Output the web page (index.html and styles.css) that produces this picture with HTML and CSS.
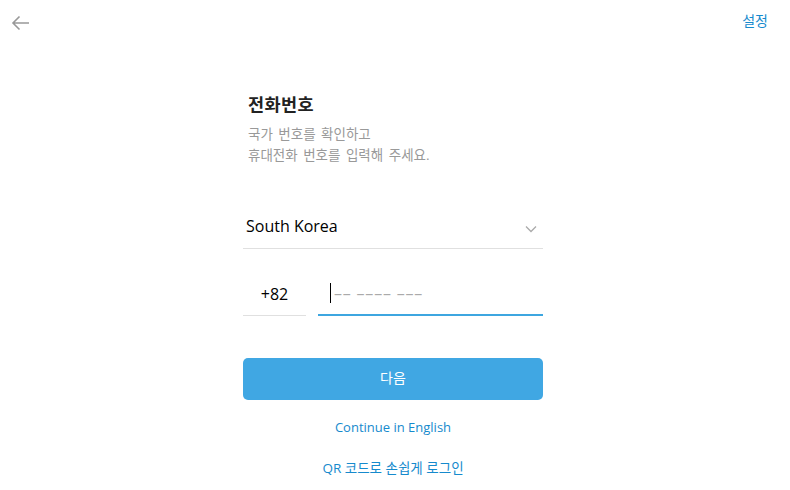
FILE: index.html
```html
<!DOCTYPE html>
<html lang="ko">
<head>
<meta charset="utf-8">
<link rel="stylesheet" href="styles.css">
</head>
<body>
<div class="app">
  <header class="topbar">
    <button class="back" aria-label="back">
      <svg width="20" height="16" viewBox="0 0 20 16"><path d="M18 8H2.5M8.5 1.5L2 8l6.5 6.5" fill="none" stroke="#999" stroke-width="1.6"/></svg>
    </button>
    <a class="settings">설정</a>
  </header>
  <main class="wrap">
    <section class="form">
      <h1 class="title">전화번호</h1>
      <p class="desc">국가 번호를 확인하고<br>휴대전화 번호를 입력해 주세요.</p>
      <div class="country">
        <span class="country-name">South Korea</span>
        <svg class="chevron" width="12" height="8" viewBox="0 0 12 8"><path d="M1 1.5l5 5 5-5" fill="none" stroke="#aaa" stroke-width="1.3"/></svg>
      </div>
      <div class="phone-row">
        <div class="code">+82</div>
        <div class="phone"><span class="caret"></span><span class="placeholder">–– –––– –––</span></div>
      </div>
      <button class="next">다음</button>
      <a class="link link-en">Continue in English</a>
      <a class="link link-qr">QR 코드로 손쉽게 로그인</a>
    </section>
  </main>
</div>
</body>
</html>
```
FILE: styles.css
```css
html, body {
  margin: 0;
  padding: 0;
  background: #fff;
}
body {
  font-family: "Open Sans", "Noto Sans CJK KR", sans-serif;
  color: #000;
}
.app {
  width: 790px;
  height: 490px;
  overflow: hidden;
}
.topbar {
  height: 44px;
  display: flex;
  justify-content: space-between;
  align-items: flex-start;
}
.back {
  border: 0;
  background: none;
  padding: 0;
  margin: 15px 0 0 11px;
  width: 20px;
  height: 16px;
  display: block;
}
.back svg { display: block; }
.settings {
  margin: 11px 22px 0 0;
  font-size: 14px;
  line-height: 20px;
  color: #168acd;
}
.wrap {
  display: flex;
  justify-content: center;
  padding-right: 4px;
}
.form {
  width: 300px;
  display: flex;
  flex-direction: column;
}
.title {
  margin: 48px 0 0 5px;
  font-size: 17.5px;
  line-height: 24px;
  letter-spacing: 0.4px;
  font-weight: 700;
  color: #222;
}
.desc {
  margin: 8px 0 0 5px;
  font-size: 13.5px;
  line-height: 21px;
  word-spacing: 2px;
  color: #999;
}
.country {
  margin-top: 38px;
  height: 44px;
  border-bottom: 1px solid #e0e0e0;
  display: flex;
  align-items: center;
  justify-content: space-between;
  padding: 0 6px 0 3px;
}
.country-name {
  font-size: 16px;
  line-height: 22px;
  color: #000;
}
.chevron { margin-top: 6px; }
.phone-row {
  margin-top: 23px;
  display: flex;
  gap: 12px;
  align-items: flex-start;
}
.code {
  width: 63px;
  height: 43px;
  border-bottom: 1px solid #e0e0e0;
  display: flex;
  align-items: center;
  justify-content: center;
  font-size: 16px;
}
.phone {
  flex: 1;
  height: 42px;
  border-bottom: 2px solid #3da6e0;
  display: flex;
  align-items: center;
  padding-left: 12px;
  font-size: 16px;
  color: #999;
}
.caret {
  width: 1px;
  height: 20px;
  background: #000;
  margin-right: 3px;
}
.placeholder {
  color: #aaa;
  letter-spacing: 0.8px;
}
.next {
  margin-top: 42px;
  height: 42px;
  border: 0;
  border-radius: 5px;
  background: #40a7e3;
  color: #fff;
  font-family: "Open Sans", "Noto Sans CJK KR", sans-serif;
  font-size: 14px;
  line-height: 20px;
  padding: 0 0 2px;
}
.link {
  display: block;
  text-align: center;
  color: #168acd;
  font-size: 13px;
  line-height: 20px;
}
.link-en { margin-top: 17px; }
.link-qr { margin-top: 21px; font-size: 13.5px; }
```
